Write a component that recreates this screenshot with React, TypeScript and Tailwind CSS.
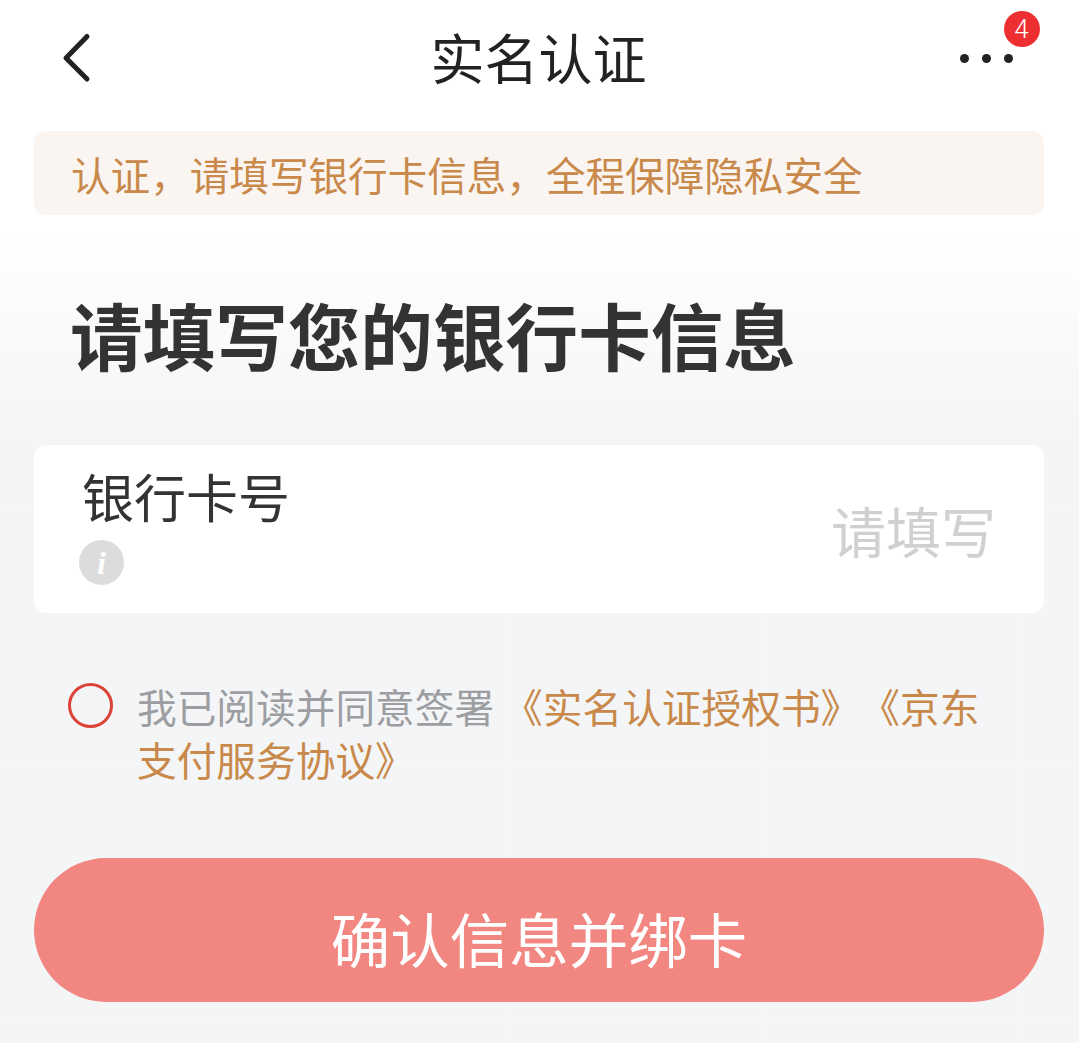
const cjk = { fontFamily: '"Noto Sans CJK SC", "Noto Sans", sans-serif' };

function Header() {
  return (
    <header className="grid h-[131px] grid-cols-[1fr_auto_1fr] items-center pb-[12px] pl-[60px] pr-[66px]">
      <svg width="32" height="52" viewBox="0 0 32 52" fill="none" className="mt-[-6px]">
        <path d="M27 5.5 L6 27 L27 48" stroke="#222222" strokeWidth="5" strokeLinecap="round" strokeLinejoin="round" />
      </svg>
      <h1 className="ml-[4px] mt-[-6px] text-[54px] leading-none text-[#222222]">实名认证</h1>
      <div className="relative mt-[-2px] flex gap-[12.5px] justify-self-end">
        <span className="h-[9.5px] w-[9.5px] rounded-full bg-[#222222]" />
        <span className="h-[9.5px] w-[9.5px] rounded-full bg-[#222222]" />
        <span className="h-[9.5px] w-[9.5px] rounded-full bg-[#222222]" />
        <span className="absolute left-[44px] top-[-43px] flex h-[36px] w-[36px] items-center justify-center rounded-full bg-[#ee2f31] text-[26px] leading-none text-white" style={{ fontFamily: '"Roboto", sans-serif', fontWeight: 300 }}>
          4
        </span>
      </div>
    </header>
  );
}

export default function App() {
  return (
    <div className="h-[1043px] w-[1079px] overflow-hidden bg-gradient-to-b from-white from-[22%] to-[#f4f5f7] to-[42%]" style={cjk}>
      <Header />
      <div className="pl-[34px] pr-[35px]">
        <div className="flex h-[84px] items-center rounded-[12px] bg-[#faf5f1] pl-[37px] text-[39.6px] leading-none whitespace-nowrap text-[#c8894a]">
          <span className="mt-[2px]">认证，请填写银行卡信息，全程保障隐私安全</span>
        </div>
        <h2 className="mt-[74px] pl-[36px] pb-[4px] text-[72.6px] font-bold leading-[90px] text-[#333333]">请填写您的银行卡信息</h2>
        <div className="mt-[62px] flex h-[168px] items-center justify-between rounded-[12px] bg-white pl-[48px] pr-[48px]">
          <div className="flex flex-col self-start pt-[21px]">
            <span className="text-[52px] leading-[60px] text-[#333333]">银行卡号</span>
            <span className="ml-[-3px] mt-[14px] flex h-[45px] w-[45px] items-center justify-center rounded-full bg-[#dcdcdc] text-[32px] font-bold italic leading-none text-white" style={{ fontFamily: '"Liberation Serif", serif' }}>
              i
            </span>
          </div>
          <span className="text-[55px] leading-none text-[#d0d0d0]">请填写</span>
        </div>
        <div className="mt-[66px] flex pl-[34px] pr-[30px]">
          <span className="mt-[4px] h-[45px] w-[45px] shrink-0 rounded-full border-[3px] border-[#dc4339]" />
          <p className="ml-[24px] text-[39.7px] leading-[53px] text-[#9c9ea1] [text-spacing-trim:space-all]">
            我已阅读并同意签署
            <span className="text-[#c8894a]"> 《实名认证授权书》《京东支付服务协议》</span>
          </p>
        </div>
        <button className="mt-[73px] flex h-[144px] w-full items-center justify-center rounded-full bg-[#f28781] pt-[16px] text-[59.5px] leading-none text-white">
          确认信息并绑卡
        </button>
      </div>
    </div>
  );
}
